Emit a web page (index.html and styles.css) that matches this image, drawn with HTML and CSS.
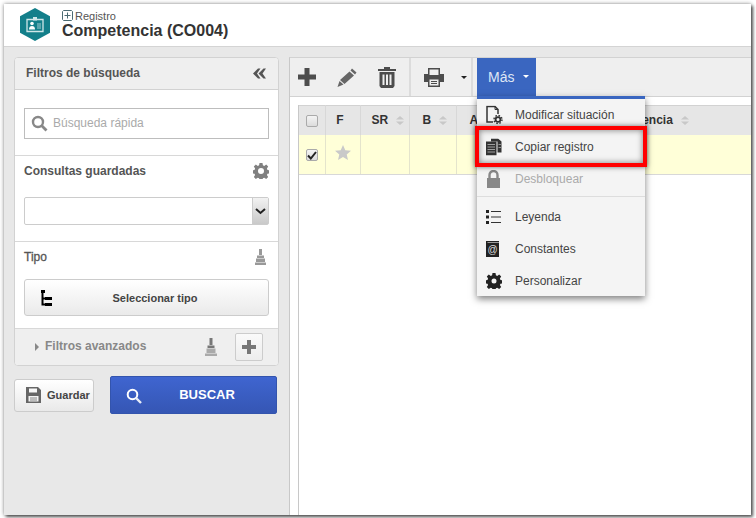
FILE: index.html
```html
<!DOCTYPE html>
<html lang="es">
<head>
<meta charset="utf-8">
<title>Competencia (CO004)</title>
<link rel="stylesheet" href="styles.css">
</head>
<body>
<div class="window">
  <header class="app-header">
    <svg class="logo" width="30" height="33" viewBox="0 0 30 33"><path d="M15 0L30 8.200V24.800L15 33L0 24.800V8.200Z" fill="#137f8a"/><path d="M7 11.500H23V23.500H7Z" fill="none" stroke="#cfe6e8" stroke-width="1.300"/><path d="M13 9H17V12.500H13Z" fill="#cfe6e8"/><circle cx="12" cy="15.500" r="1.800" fill="#fff"/><path d="M9 21.500c0-2.500 1.200-3.500 3-3.500s3 1 3 3.500z" fill="#fff"/><path d="M17 15H21V21H17Z" fill="#5aa5ad"/></svg>
    <div class="titles">
      <div class="crumb"><svg width="11" height="11" viewBox="0 0 11 11"><path d="M1.500.5H9.500L10.500 1.500V9.500L9.500 10.500H1.500L.5 9.500V1.500Z" fill="none" stroke="#4b6a72"/><path d="M5.500 2.500V8.500M2.500 5.500H8.500" stroke="#4b6a72"/></svg><span>Registro</span></div>
      <h1>Competencia (CO004)</h1>
    </div>
  </header>
  <div class="content">
    <aside class="side">
      <section class="panel">
        <div class="panel-head">
          <span>Filtros de búsqueda</span>
          <svg width="13" height="11" viewBox="0 0 13 11"><path d="M5 .5L0 5.500L5 10.500H7.500L4 5.500L7.500 .5ZM10.500 .5L5.500 5.500L10.500 10.500H13L9.500 5.500L13 .5Z" fill="#555"/></svg>
        </div>
        <div class="block search-block">
          <div class="search">
            <svg width="17" height="17" viewBox="0 0 17 17"><circle cx="7" cy="7" r="5" fill="none" stroke="#888" stroke-width="2.400"/><path d="M10.800 10.800L15.500 15.500" stroke="#888" stroke-width="2.800"/></svg>
            <span>Búsqueda rápida</span>
          </div>
        </div>
        <div class="block saved-block">
          <div class="label-row">
            <b>Consultas guardadas</b>
            <svg width="16" height="16" viewBox="0 0 16 16"><path fill="#808080" fill-rule="evenodd" d="M6.500 0h3l.4 2.300 1.300.6 2-1.300 2 2-1.300 2 .6 1.300 2 .4v3l-2 .4-.6 1.300 1.300 2-2 2-2-1.300-1.300.6-.4 2.100h-3l-.4-2.100-1.300-.6-2 1.300-2-2 1.300-2-.6-1.300-2-.4v-3l2-.4.600-1.300-1.300-2 2-2 2 1.300 1.300-.6zM8 5a3 3 0 100 6 3 3 0 000-6z"/></svg>
          </div>
          <div class="select">
            <div class="select-arrow"><svg width="11" height="7" viewBox="0 0 11 7"><path d="M1 1L5.500 5L10 1" fill="none" stroke="#222" stroke-width="2"/></svg></div>
          </div>
        </div>
        <div class="block type-block">
          <div class="label-row">
            <b>Tipo</b>
            <svg width="11" height="16" viewBox="0 0 11 16"><path d="M4 0H7V6H4ZM2 6.500H9V9H2Z M1 9.500H10V13H1Z M0 13.500H11V16H0Z" fill="#999"/></svg>
          </div>
          <button class="type-btn" type="button">
            <svg width="11" height="16" viewBox="0 0 11 16"><path d="M0 0H4V3H0ZM4 7H11V10H4ZM4 13H11V16H4Z" fill="#000"/><path d="M1.500 3V14.500H5M1.500 8.500H5" fill="none" stroke="#000" stroke-width="2"/></svg>
            <span>Seleccionar tipo</span>
          </button>
        </div>
        <div class="advanced">
          <i class="tri"></i>
          <span class="adv-label">Filtros avanzados</span>
          <svg class="adv-broom" width="12" height="18" viewBox="0 0 12 18"><path d="M4.500 0H7.500V7H4.500ZM2.500 7.500H9.500V10H2.500Z" fill="#777"/><path d="M1.500 10.500H10.500V15H1.500ZM0 15.500H12V18H0Z" fill="#aaa"/></svg>
          <div class="plus-btn"><svg width="14" height="14" viewBox="0 0 14 14"><path d="M5 0H9V5H14V9H9V14H5V9H0V5H5Z" fill="#777"/></svg></div>
        </div>
      </section>
      <div class="actions">
        <button class="save" type="button">
          <svg width="15" height="16" viewBox="0 0 15 16"><path fill="#666" fill-rule="evenodd" d="M0 0H12L15 3V16H0ZM3 1.500V5.500H11V1.500ZM2.500 9V14.500H12.500V9Z"/><path d="M4 10.500H11V11.500H4ZM4 12.500H11V13.500H4Z" fill="#888"/></svg>
          <span>Guardar</span>
        </button>
        <button class="find" type="button">
          <svg width="16" height="16" viewBox="0 0 16 16"><circle cx="6.500" cy="6.500" r="4.800" fill="none" stroke="#fff" stroke-width="2"/><path d="M10 10L15 15" stroke="#e8edf8" stroke-width="2.400"/></svg>
          <span>BUSCAR</span>
        </button>
      </div>
    </aside>
    <main class="main">
      <div class="toolbar">
        <div class="tool-group">
          <svg width="18" height="18" viewBox="0 0 18 18"><path d="M6.500 0H11.500V6.500H18V11.500H11.500V18H6.500V11.500H0V6.500H6.500Z" fill="#4d4d4d"/></svg>
          <svg width="20" height="19" viewBox="0 0 20 19"><path d="M15 .5L19.500 4.500L18 6.500L13.500 2.500ZM12.500 3.500L17 7.500L7.500 16L3 12Z M2.500 13L6.500 16.500L.5 19Z" fill="#666"/></svg>
          <svg width="18" height="21" viewBox="0 0 18 21"><path d="M6 0H12V2H18V4H0V2H6Z" fill="#4d4d4d"/><path fill="#4d4d4d" fill-rule="evenodd" d="M1.500 5H16.500V19L15 21H3L1.500 19ZM4.500 7.500V18H6.500V7.500ZM8 7.500V18H10V7.500ZM11.500 7.500V18H13.500V7.500Z"/></svg>
        </div>
        <div class="tool-print">
          <svg width="20" height="19" viewBox="0 0 20 19"><path fill="#4d4d4d" fill-rule="evenodd" d="M4 0H16V6H20V14H16V19H4V14H0V6H4ZM5.500 1.500V7H14.500V1.500ZM5.500 11.500V17.500H14.500V11.500Z"/><path d="M7 13H13V14H7ZM7 15H13V16H7Z" fill="#4d4d4d"/></svg>
          <i class="caret dark"></i>
        </div>
        <div class="more"><span>Más</span><i class="caret"></i></div>
      </div>
      <div class="table-wrap">
        <table class="grid">
          <colgroup><col class="c1"><col class="c2"><col class="c3"><col class="c4"><col class="c5"><col></colgroup>
          <thead>
            <tr>
              <th><span class="check"></span></th>
              <th class="fav">F</th>
              <th class="sortable">SR<svg class="sort" width="8" height="9" viewBox="0 0 8 9"><path d="M4 0L8 3.500H0ZM4 9L0 5.500H8Z" fill="#c8c8c8"/></svg></th>
              <th class="sortable b">B<svg class="sort" width="8" height="9" viewBox="0 0 8 9"><path d="M4 0L8 3.500H0ZM4 9L0 5.500H8Z" fill="#c8c8c8"/></svg></th>
              <th class="sortable a">A</th>
              <th class="sortable last">Competencia<svg class="sort" width="8" height="9" viewBox="0 0 8 9"><path d="M4 0L8 3.500H0ZM4 9L0 5.500H8Z" fill="#c8c8c8"/></svg></th>
            </tr>
          </thead>
          <tbody>
            <tr>
              <td><span class="check on"><svg width="10" height="9" viewBox="0 0 10 9"><path d="M1 4.500L3.800 7.500L9 1" fill="none" stroke="#222" stroke-width="2"/></svg></span></td>
              <td class="star"><svg width="16" height="15" viewBox="0 0 16 15"><path d="M8 0L10.300 5.200L16 5.700L11.700 9.400L13 15L8 12L3 15L4.300 9.400L0 5.700L5.700 5.200Z" fill="#c9c9c9"/></svg></td>
              <td></td><td></td><td></td><td></td>
            </tr>
          </tbody>
        </table>
      </div>
    </main>
  </div>
  <nav class="menu">
    <div class="item"><svg width="17" height="19" viewBox="0 0 17 19"><path d="M7 16.500H1V1H9L12 4V8.500" fill="none" stroke="#333" stroke-width="1.500"/><path d="M9 1V4H12" fill="none" stroke="#333"/><circle cx="12" cy="14" r="2.400" fill="none" stroke="#333" stroke-width="1.800"/><circle cx="12" cy="14" r="4" fill="none" stroke="#333" stroke-width="1.400" stroke-dasharray="1.600 1.540"/></svg><span>Modificar situación</span></div>
    <div class="item"><svg width="16" height="17" viewBox="0 0 16 17"><path d="M5 0H12L15.500 3V14H11.500V3H5Z" fill="#333"/><path d="M0 3H10.500V17H0Z" fill="#333"/><path d="M1.500 6H9M1.500 8.500H9M1.500 11H9M1.500 13.500H9" stroke="#aaa" stroke-width=".9"/><path d="M12.500 6H15M12.500 9H15" stroke="#aaa" stroke-width=".8"/></svg><span>Copiar registro</span></div>
    <div class="item off"><svg width="15" height="18" viewBox="0 0 15 18"><path d="M3.500 8V5a4 4 0 018 0V8" fill="none" stroke="#888" stroke-width="2.400"/><path fill="#888" d="M1 8H14V18H1Z"/></svg><span>Desbloquear</span></div>
    <div class="rule"></div>
    <div class="item"><svg width="15" height="14" viewBox="0 0 15 14"><path d="M0 0H3V3H0ZM0 5.500H3V8.500H0ZM0 11H3V14H0Z" fill="#222"/><path d="M5 1.500H15M5 7H15M5 12.500H15" stroke="#333" stroke-width="1.200"/></svg><span>Leyenda</span></div>
    <div class="item"><svg width="13" height="16" viewBox="0 0 13 16"><path d="M0 0H13V16H0Z" fill="#222"/><path d="M1.500 1.500H13" stroke="#999"/><text x="6.500" y="12" font-size="10" text-anchor="middle" fill="#ddd" font-family="Liberation Sans">@</text></svg><span>Constantes</span></div>
    <div class="item"><svg width="16" height="16" viewBox="0 0 16 16"><path fill="#222" fill-rule="evenodd" d="M6.500 0h3l.4 2.300 1.300.6 2-1.300 2 2-1.300 2 .6 1.300 2 .4v3l-2 .4-.6 1.300 1.300 2-2 2-2-1.300-1.300.6-.4 2.100h-3l-.4-2.100-1.300-.6-2 1.300-2-2 1.300-2-.6-1.300-2-.4v-3l2-.4.600-1.300-1.300-2 2-2 2 1.300 1.300-.6zM8 5.500a2.500 2.500 0 100 5 2.500 2.500 0 000-5z"/></svg><span>Personalizar</span></div>
  </nav>
  <div class="callout"></div>
</div>
</body>
</html>
```
FILE: styles.css
```css
* { box-sizing: border-box; }
html, body { margin: 0; padding: 0; background: #fff; }
body { width: 756px; height: 518px; overflow: hidden; font-family: "Liberation Sans", Arial, sans-serif; }
button { font-family: inherit; padding: 0; cursor: default; }

.window { position: relative; margin: 4px 0 0 4px; width: 747px; height: 511px; background: #e8e8e8; display: flex; flex-direction: column; box-shadow: 0 0 4px rgba(0,0,0,.45), 2px 2px 3px rgba(0,0,0,.6); }

.app-header { height: 43px; flex: none; background: #fff; border-bottom: 1px solid #d4d4d4; display: flex; align-items: flex-start; padding: 4px 0 0 16px; }
.titles { margin-left: 12px; padding-top: 2px; }
.crumb { display: flex; align-items: center; gap: 2px; height: 11px; font-size: 11px; color: #555; }
h1 { margin: 0; font-size: 16px; line-height: 20px; font-weight: 700; color: #333; }

.content { flex: 1; display: flex; min-height: 0; }
.side { width: 285px; flex: none; padding: 10px 10px 0 10px; }
.panel { height: 309px; background: #fff; border: 1px solid #d2d2d2; border-radius: 4px; overflow: hidden; display: flex; flex-direction: column; }
.panel-head { height: 32px; flex: none; background: #efefef; border-bottom: 1px solid #d2d2d2; display: flex; align-items: center; justify-content: space-between; padding: 0 12px 1px 11px; font-size: 12px; font-weight: 700; color: #555; }
.block { border-bottom: 1px solid #d8d8d8; padding: 0 9px; flex: none; }
.search-block { height: 66px; padding-top: 18px; }
.search { height: 31px; border: 1px solid #bdbdbd; display: flex; align-items: center; gap: 5px; padding: 0 0 1px 6px; font-size: 12px; color: #aaa; }
.saved-block { height: 86px; padding-top: 6px; }
.label-row { display: flex; align-items: center; justify-content: space-between; height: 17px; font-size: 12px; color: #555; }
.label-row b { font-weight: 700; }
.select { margin-top: 18px; height: 28px; border: 1px solid #ccc; border-radius: 2px; display: flex; justify-content: flex-end; }
.select-arrow { width: 16px; background: linear-gradient(#f2f2f2, #c9c9c9); border-left: 1px solid #ccc; display: flex; align-items: center; justify-content: center; }
.type-block { height: 87px; padding-top: 6px; }
.type-block .label-row b { font-weight: 400; -webkit-text-stroke: .3px #555; }
.type-block .label-row svg { margin-right: 3px; }
.type-btn { position: relative; display: flex; align-items: center; justify-content: center; margin-top: 14px; width: 245px; height: 37px; border: 1px solid #ccc; border-radius: 3px; background: linear-gradient(#fff, #eaeaea); padding-left: 17px; font-size: 11px; font-weight: 700; color: #444; }
.type-btn svg { position: absolute; left: 16px; top: 10px; }
.advanced { flex: 1; background: #efefef; display: flex; align-items: center; padding-left: 20px; font-size: 12px; font-weight: 700; color: #888; }
.tri { width: 0; height: 0; border-left: 4px solid #888; border-top: 4px solid transparent; border-bottom: 4px solid transparent; margin-right: 6px; }
.adv-label { width: 160px; padding-bottom: 2px; }
.adv-broom { margin-bottom: 1px; }
.plus-btn { margin-left: 18px; width: 28px; height: 28px; border: 1px solid #ccc; border-radius: 2px; background: linear-gradient(#fafafa, #ededed); display: flex; align-items: center; justify-content: center; }

.actions { display: flex; align-items: center; gap: 16px; margin-top: 10px; }
.save { width: 80px; height: 33px; border: 1px solid #ccc; border-radius: 3px; background: linear-gradient(#fff, #e9e9e9); display: flex; align-items: center; gap: 6px; padding-left: 11px; font-size: 11px; font-weight: 700; color: #444; }
.find { position: relative; width: 167px; height: 38px; border: 1px solid #3354ad; border-radius: 2px; background: linear-gradient(#3f65d0, #3556b4); display: flex; align-items: center; justify-content: center; font-size: 13px; font-weight: 700; color: #fff; padding: 0 0 2px 27px; }
.find svg { position: absolute; left: 15px; top: 11px; }

.main { flex: 1; margin-top: 10px; background: #fff; border-left: 1px solid #c8c8c8; border-top: 1px solid #d2d2d2; display: flex; flex-direction: column; min-width: 0; }
.toolbar { height: 39px; flex: none; background: #efefef; border-bottom: 1px solid #d2d2d2; display: flex; align-items: stretch; }
.tool-group { width: 121px; border-right: 2px solid #dcdcdc; display: flex; align-items: center; gap: 21px; padding-left: 8px; }
.tool-print { width: 62px; border-right: 2px solid #dcdcdc; display: flex; align-items: center; padding-left: 13px; gap: 17px; }
.more { margin-left: 4px; width: 59px; background: #3a66c0; color: #dfe6f5; font-size: 14px; display: flex; align-items: center; padding: 0 0 2px 11px; gap: 9px; margin-bottom: -1px; }
.caret { width: 0; height: 0; border-top: 3px solid #fff; border-left: 3px solid transparent; border-right: 3px solid transparent; }
.caret.dark { border-top-color: #222; }

.table-wrap { flex: 1; border-left: 1px solid #c8c8c8; margin: 8px 0 0 8px; }
.grid { width: 100%; border-collapse: collapse; table-layout: fixed; font-size: 12px; color: #333; }
.c1 { width: 26px; } .c2 { width: 35px; } .c3 { width: 49px; } .c4 { width: 47px; } .c5 { width: 60px; }
.grid th { height: 29px; background: #e6e6e6; border-top: 1px solid #d2d2d2; border-right: 1px solid #d8d8d8; font-weight: 700; text-align: center; padding: 0; }
.grid th.fav { padding-right: 5px; }
.grid th.sortable { text-align: left; padding-left: 11px; }
.grid th.b { padding-left: 13px; }
.grid th.a { padding-left: 13px; }
.grid th.last { padding-left: 81px; border-right: 0; }
.sort { vertical-align: -1px; margin-left: 8px; }
.grid td { height: 40px; background: #ffffd8; border-right: 1px solid #e4e4cc; border-bottom: 1px solid #d8d8d8; text-align: center; padding: 0; }
.grid td:last-child { border-right: 0; }
.check { display: inline-flex; align-items: center; justify-content: center; width: 12px; height: 12px; border: 1px solid #aaa; border-radius: 2px; background: linear-gradient(#f4f4f4, #dcdcdc); vertical-align: middle; }

.menu { position: absolute; left: 473px; top: 92px; width: 168px; height: 200px; background: #f4f4f4; border-top: 3px solid #3a66c0; box-shadow: 0 3px 7px rgba(0,0,0,.5); font-size: 12px; color: #444; overflow: hidden; }
.item { position: relative; height: 32px; display: flex; align-items: center; padding-left: 38px; }
.item svg { position: absolute; left: 9px; top: 50%; transform: translateY(-50%); }
.item.off { color: #aaa; }
.rule { height: 6px; background: linear-gradient(#ddd, #ddd) 0 1px / 100% 1px no-repeat; }
.callout { position: absolute; left: 471px; top: 122px; width: 172px; height: 41px; border: 4px solid #f00; box-shadow: 0 0 5px rgba(0,0,0,.55), inset 0 0 6px rgba(0,0,0,.5); }
```
